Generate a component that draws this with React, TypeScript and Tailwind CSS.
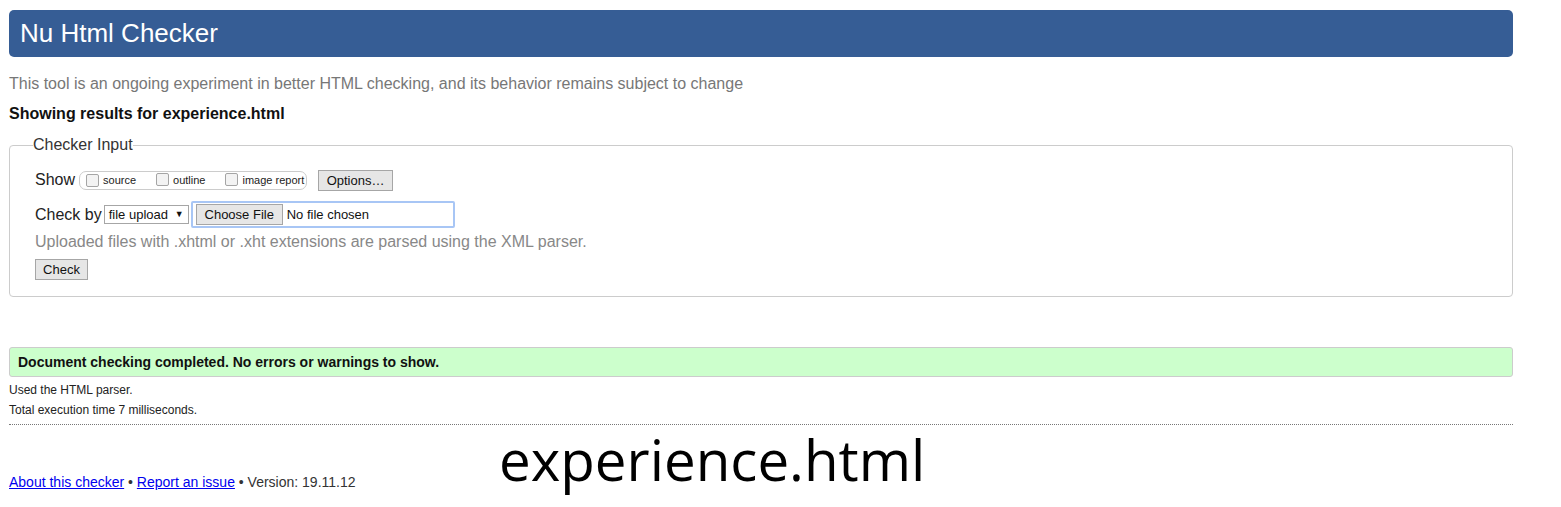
import React from "react";

function Box() {
  return <span className="inline-block w-[13px] h-[13px] rounded-[2px] border border-[#a5a5a5] bg-[#f3f3f3] align-[-2px] mr-[4px]" />;
}

export default function App() {
  return (
    <div className="relative w-[1561px] h-[507px] bg-white font-['Liberation_Sans',Arial,sans-serif] text-[#222]">
      <div className="ml-[9px] w-[1504px] pt-[10px]">
        <div className="h-[47px] rounded-[5px] bg-[#365d95] pl-[11px] flex items-center">
          <h1 className="text-[26px] leading-none text-white -mt-[1px]">Nu Html Checker</h1>
        </div>

        <p className="mt-[17px] text-[16px] leading-[20px] text-[#777]">
          This tool is an ongoing experiment in better HTML checking, and its behavior remains subject to change
        </p>
        <p className="mt-[11px] text-[16px] leading-[18px] font-bold text-[#111]">Showing results for experience.html</p>

        <fieldset className="mt-[13px] h-[161px] rounded-[4px] border border-[#ccc] px-[25px]">
          <legend className="ml-[-2px] px-0 text-[16px] leading-[18px] text-[#333]">Checker Input</legend>

          <div className="mt-[15px] flex items-center h-[22px]">
            <span className="text-[16px] text-[#222]">Show</span>
            <div className="ml-[4px] w-[228px] h-[19px] rounded-[7px] border border-[#ccc] flex items-center pl-[6px] text-[11px] text-[#222]">
              <Box />
              <span>source</span>
              <span className="ml-[20px]"><Box /></span>
              <span>outline</span>
              <span className="ml-[20px]"><Box /></span>
              <span>image report</span>
            </div>
            <button className="ml-[11px] w-[75px] h-[21px] border border-[#a6a6a6] bg-[#e6e6e6] text-[13px] text-[#111] leading-none">Options…</button>
          </div>

          <div className="mt-[10px] flex items-center h-[27px]">
            <span className="text-[16px] text-[#222]">Check by</span>
            <div className="ml-[2px] w-[85px] h-[19px] border border-[#a6a6a6] flex items-center justify-between pl-[4px] pr-[4px] text-[13px] text-[#111]">
              <span>file upload</span>
              <span className="text-[9px]">▼</span>
            </div>
            <div className="ml-[2px] w-[264px] h-[27px] border-2 border-[#a8c6f5] rounded-[2px] flex items-center pl-[3px] text-[13px] text-[#111]">
              <button className="w-[87px] h-[21px] border border-[#a6a6a6] bg-[#e6e6e6] text-[13px] leading-none">Choose File</button>
              <span className="ml-[4px]">No file chosen</span>
            </div>
          </div>

          <p className="mt-[4px] text-[16px] leading-[20px] text-[#888]">Uploaded files with .xhtml or .xht extensions are parsed using the XML parser.</p>

          <button className="mt-[7px] w-[53px] h-[21px] border border-[#a6a6a6] bg-[#e6e6e6] text-[13px] text-[#111] leading-none">Check</button>
        </fieldset>

        <div className="mt-[50px] h-[30px] rounded-[3px] border border-[#ccc] bg-[#ccffcc] flex items-center pl-[8px]">
          <p className="text-[14px] font-bold text-[#111]">Document checking completed. No errors or warnings to show.</p>
        </div>
        <p className="mt-[6px] text-[12px] leading-[15px] text-[#222]">Used the HTML parser.</p>
        <p className="mt-[5px] text-[12px] leading-[15px] text-[#222]">Total execution time 7 milliseconds.</p>
        <div className="mt-[6px] border-t border-dotted border-[#777]" />

        <p className="mt-[49px] text-[14px] leading-[16px] text-[#333]">
          <a href="#" className="text-[#0000ee] underline">About this checker</a> •{" "}
          <a href="#" className="text-[#0000ee] underline">Report an issue</a> • Version: 19.11.12
        </p>
      </div>

      <div className="absolute left-[499px] top-[420px] text-[56.5px] leading-[80px] text-black font-['Open_Sans',sans-serif]">experience.html</div>
    </div>
  );
}
